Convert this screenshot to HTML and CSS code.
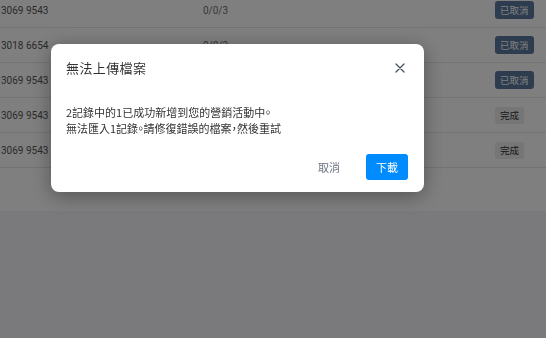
FILE: index.html
```html
<!DOCTYPE html>
<html lang="zh-Hant">
  <head>
    <meta charset="UTF-8" />
    <meta name="viewport" content="width=device-width, initial-scale=1.0" />
    <title>上傳檔案</title>
    <link rel="stylesheet" href="styles.css">
  </head>
  <body>
    <div class="table">
      <div class="row">
        <span class="phone">3069 9543</span>
        <span class="count">0/0/3</span>
        <span><span class="badge badge-cancel">已取消</span></span>
      </div>
      <div class="row">
        <span class="phone">3018 6654</span>
        <span class="count">0/0/3</span>
        <span><span class="badge badge-cancel">已取消</span></span>
      </div>
      <div class="row">
        <span class="phone">3069 9543</span>
        <span class="count">0/0/3</span>
        <span><span class="badge badge-cancel">已取消</span></span>
      </div>
      <div class="row">
        <span class="phone">3069 9543</span>
        <span class="count">0/0/3</span>
        <span><span class="badge badge-done">完成</span></span>
      </div>
      <div class="row">
        <span class="phone">3069 9543</span>
        <span class="count">0/0/3</span>
        <span><span class="badge badge-done">完成</span></span>
      </div>
    </div>

    <!-- Upload error dialog -->
    <div class="overlay">
      <div class="modal">
        <div class="modal-header">
          <h2>無法上傳檔案</h2>
          <button class="close" aria-label="關閉">
            <svg width="10" height="10" viewBox="0 0 10 10">
              <path d="M1 1L9 9M9 1L1 9" stroke="#4a5260" stroke-width="1.3" stroke-linecap="round" />
            </svg>
          </button>
        </div>
        <div class="modal-body">
          <p>2記錄中的1已成功新增到您的營銷活動中。</p>
          <p>無法匯入1記錄。請修復錯誤的檔案，然後重試</p>
        </div>
        <div class="modal-footer">
          <button class="btn-text">取消</button>
          <button class="btn-primary">下載</button>
        </div>
      </div>
    </div>
  </body>
</html>
```

FILE: styles.css
```css
/* Basic page styles */
body {
  font-family: Roboto, "Noto Sans CJK TC", sans-serif;
  margin: 0;
  padding: 0;
  background-color: #f4f5f8;
  overflow: hidden;
}
.table {
  margin-top: -7px;
  padding-bottom: 43px;
  background-color: #fff;
}
.row {
  display: grid;
  grid-template-columns: 203px 292px 1fr;
  align-items: center;
  height: 35px;
  box-sizing: border-box;
  border-bottom: 1px solid #e6e6e6;
  font-size: 10px;
}
.phone {
  padding-left: 1px;
  color: #555;
}
.count {
  color: #707070;
}
.badge {
  display: inline-block;
  padding: 0 5px;
  height: 18px;
  line-height: 18px;
  border-radius: 3px;
  font-family: "Noto Sans CJK TC", sans-serif;
  font-size: 9.5px;
}
.badge-cancel {
  background-color: #5a789e;
  color: #fff;
}
.badge-done {
  background-color: #ececec;
  color: #333;
  height: 17px;
  line-height: 17px;
}
.overlay {
  position: fixed;
  inset: 0;
  background-color: rgba(0, 0, 0, 0.5);
}
.modal {
  position: absolute;
  left: 51px;
  top: 44px;
  width: 373px;
  background-color: #fff;
  border-radius: 8px;
  box-shadow: 0 4px 20px rgba(0, 0, 0, 0.35);
  font-family: "Noto Sans CJK TC", sans-serif;
  color: #333;
}
.modal-header {
  display: flex;
  justify-content: space-between;
  align-items: center;
  padding: 15px 19px 17px 15px;
}
.modal-header h2 {
  margin: 0;
  font-size: 13px;
  font-weight: 400;
  line-height: 18px;
  letter-spacing: 0.4px;
}
.close {
  display: flex;
  padding: 0;
  border: 0;
  background: none;
}
.modal-body {
  padding: 10px 15px 0;
  font-size: 11px;
  line-height: 16px;
  font-feature-settings: "halt";
}
.modal-body p {
  margin: 0;
}
.modal-footer {
  display: flex;
  justify-content: flex-end;
  align-items: center;
  gap: 14px;
  padding: 18px 16px 12px;
}
.modal-footer button {
  font-family: "Noto Sans CJK TC", sans-serif;
  font-size: 11px;
  border: 0;
  height: 26px;
}
.btn-text {
  padding: 0 12px;
  background: none;
  color: #6b7380;
}
.btn-primary {
  padding: 0 10px;
  border-radius: 3px;
  background-color: #008cff;
  color: #fff;
}
```
